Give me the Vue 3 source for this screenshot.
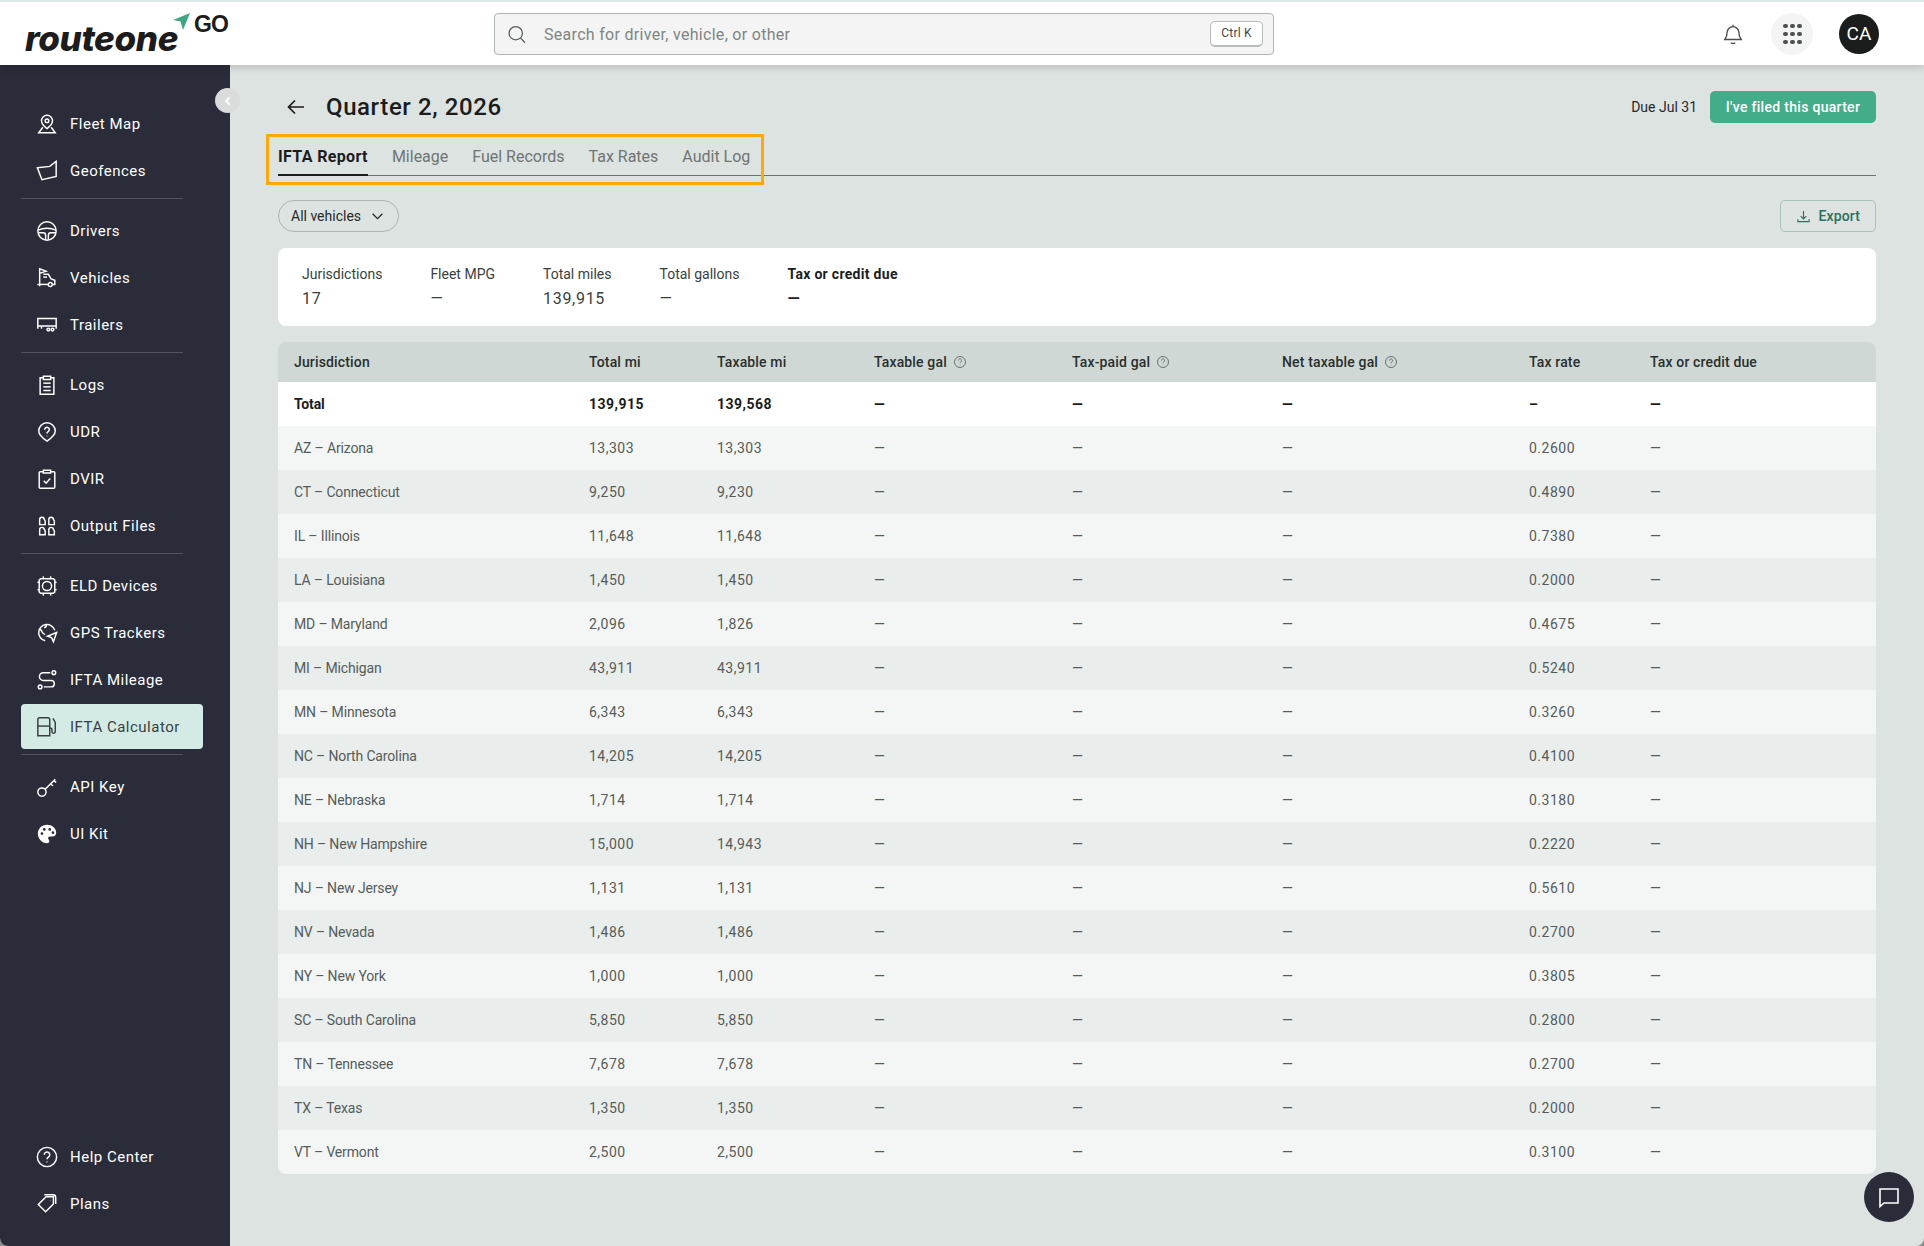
<script setup>
const navGroups = [
  [
    { label: 'Fleet Map', icon: ['M12 2.500a6 6 0 0 1 6 6c0 3.200-3 6.200-6 8.500-3-2.300-6-5.300-6-8.500a6 6 0 0 1 6-6z', 'M12 6.500a2 2 0 1 0 0 4 2 2 0 0 0 0-4z', 'M7.500 15.500 3 21.500h18l-4.500-6'] },
    { label: 'Geofences', icon: ['M1.500 8.500 15 7l7-5.500V18L6.500 21.500z'] }
  ],
  [
    { label: 'Drivers', icon: ['M12 2a10 10 0 1 0 0 20 10 10 0 0 0 0-20z', 'M2.500 11c3-1.500 6.300-2 9.500-2s6.500.500 9.500 2', 'M2.500 14H8c1.500 0 2.500 1.500 2.500 3v4.500', 'M21.500 14H16c-1.500 0-2.500 1.500-2.500 3v4.500'] },
    { label: 'Vehicles', icon: ['M4 21V2l7 2.500-7 2.500', 'M8 8h5.500l3 5 4 1.500V19h-2', 'M3 19H1.500', 'M3 19h10', 'M8 11h4', 'M15.500 17a2.200 2.200 0 1 0 0 4.400 2.200 2.200 0 0 0 0-4.400z'] },
    { label: 'Trailers', icon: ['M2 5h20v8H2z', 'M2 13v3', 'M22 13v3', 'M6 13v3', 'M13.500 15.500a1.500 1.500 0 1 0 0 3 1.500 1.500 0 0 0 0-3z', 'M18 15.500a1.500 1.500 0 1 0 0 3 1.500 1.500 0 0 0 0-3z'] }
  ],
  [
    { label: 'Logs', icon: ['M8 4H4.500v18h15V4H16', 'M8 2.500h8v3.500H8z', 'M8 10h8', 'M8 14h8', 'M8 18h8'] },
    { label: 'UDR', icon: ['M12 2a9 9 0 0 1 9 9c0 4.500-4.500 8-9 11-4.500-3-9-6.500-9-11a9 9 0 0 1 9-9z', 'M9.500 9.500a2.500 2.500 0 1 1 3.800 2.100c-.9.600-1.300 1-1.300 2', 'M12 16v.600'] },
    { label: 'DVIR', icon: ['M8 4H4.500a1 1 0 0 0-1 1v16a1 1 0 0 0 1 1h15a1 1 0 0 0 1-1V5a1 1 0 0 0-1-1H16', 'M8 2.500h8v3H8z', 'M8.500 14l2.500 2.500 4.500-5'] },
    { label: 'Output Files', icon: ['M4 10.500V5a2.500 2.500 0 0 1 5 0 2 2 0 0 1 1 1.500v4z', 'M14 10.500V5a2.500 2.500 0 0 1 5 0 2 2 0 0 1 1 1.500v4z', 'M4 21.500V16a2.500 2.500 0 0 1 5 0 2 2 0 0 1 1 1.500v4z', 'M14 21.500V16a2.500 2.500 0 0 1 5 0 2 2 0 0 1 1 1.500v4z'] }
  ],
  [
    { label: 'ELD Devices', icon: ['M5 4h14l1.500 1.500v13L19 20H5l-1.500-1.500v-13z', 'M12 7a5 5 0 1 0 0 10 5 5 0 0 0 0-10z', 'M8 1.500V4', 'M16 1.500V4', 'M8 20v2.500', 'M16 20v2.500', 'M1.500 8h2', 'M1.500 16h2', 'M20.500 8h2', 'M20.500 16h2'] },
    { label: 'GPS Trackers', icon: ['M10 20.500A9 9 0 1 1 20.500 9', 'M3 8c2 0 3 1 3.500 2.500.5 2 2.500 2 3 3.500', 'M11 2.500c1 2 0 3-2 4', 'M22.500 11.500l-10 4 4.500 1.500 2 4.500z'] },
    { label: 'IFTA Mileage', icon: ['M19.500 2a2 2 0 1 0 0 4 2 2 0 0 0 0-4z', 'M15.500 4H8a4 4 0 0 0 0 8.500h8.500a3.500 3.500 0 0 1 0 7H8.500', 'M4.500 17.500a2 2 0 1 0 0 4 2 2 0 0 0 0-4z'] },
    { label: 'IFTA Calculator', active: true, icon: ['M2 21.500V4a2 2 0 0 1 2-2h9a2 2 0 0 1 2 2v17.500z', 'M2 11h13', 'M18.500 2.500 21 7v10a1.800 1.800 0 0 1-3.600 0v-2.500c0-1-.9-1.500-2.400-1.500'] }
  ],
  [
    { label: 'API Key', icon: ['M6.500 13a4.500 4.500 0 1 0 0 9 4.500 4.500 0 0 0 0-9z', 'M10 14.500 21 3.500', 'M16 8.500l2.500 2.500', 'M19.500 5l2.500 2'] },
    { label: 'UI Kit', fill: true, icon: ['M12 2C6.200 2 2 6.300 2 11.700 2 17 6.400 22 12 22c1.600 0 2.500-1 2.500-2.200 0-1.500-1.300-1.800-1.300-3.100 0-1.100.9-1.900 2.100-1.900H18c2.500 0 4-1.800 4-4.200C22 5.700 17.500 2 12 2zM6.500 13a1.500 1.500 0 1 1 0-3 1.500 1.500 0 0 1 0 3zM9 8.500a1.500 1.500 0 1 1 0-3 1.500 1.500 0 0 1 0 3zm6 0a1.500 1.500 0 1 1 0-3 1.500 1.500 0 0 1 0 3zm3.500 3.500a1.500 1.500 0 1 1 0-3 1.500 1.500 0 0 1 0 3z'] }
  ]
]

const bottomNav = [
  { label: 'Help Center', icon: ['M12 1.500a10.500 10.500 0 1 0 0 21 10.500 10.500 0 0 0 0-21z', 'M9 9.500a3 3 0 1 1 4.500 2.600c-1 .6-1.500 1.100-1.500 2.400', 'M12 17v.600'] },
  { label: 'Plans', icon: ['M2.500 12.500 11 4h8v8l-8.500 8.500z', 'M15.500 7.500v.500', 'M9 2h9.500a3 3 0 0 1 3 3v7'] }
]

const tabs = ['IFTA Report', 'Mileage', 'Fuel Records', 'Tax Rates', 'Audit Log']

const stats = [
  { label: 'Jurisdictions', value: '17' },
  { label: 'Fleet MPG', value: '—' },
  { label: 'Total miles', value: '139,915' },
  { label: 'Total gallons', value: '—' },
  { label: 'Tax or credit due', value: '—', strong: true }
]

const columns = [
  { label: 'Jurisdiction' },
  { label: 'Total mi' },
  { label: 'Taxable mi' },
  { label: 'Taxable gal', help: true },
  { label: 'Tax-paid gal', help: true },
  { label: 'Net taxable gal', help: true },
  { label: 'Tax rate' },
  { label: 'Tax or credit due' }
]

const rows = [
  ['AZ – Arizona', '13,303', '13,303', '0.2600'],
  ['CT – Connecticut', '9,250', '9,230', '0.4890'],
  ['IL – Illinois', '11,648', '11,648', '0.7380'],
  ['LA – Louisiana', '1,450', '1,450', '0.2000'],
  ['MD – Maryland', '2,096', '1,826', '0.4675'],
  ['MI – Michigan', '43,911', '43,911', '0.5240'],
  ['MN – Minnesota', '6,343', '6,343', '0.3260'],
  ['NC – North Carolina', '14,205', '14,205', '0.4100'],
  ['NE – Nebraska', '1,714', '1,714', '0.3180'],
  ['NH – New Hampshire', '15,000', '14,943', '0.2220'],
  ['NJ – New Jersey', '1,131', '1,131', '0.5610'],
  ['NV – Nevada', '1,486', '1,486', '0.2700'],
  ['NY – New York', '1,000', '1,000', '0.3805'],
  ['SC – South Carolina', '5,850', '5,850', '0.2800'],
  ['TN – Tennessee', '7,678', '7,678', '0.2700'],
  ['TX – Texas', '1,350', '1,350', '0.2000'],
  ['VT – Vermont', '2,500', '2,500', '0.3100']
]
</script>

<template>
  <div class="page">
    <header class="topbar">
      <div class="logo">
        <span class="logo-word">routeone</span>
        <svg class="logo-plane" viewBox="0 0 18 18"><path d="M0 7 17 0 10 17 7.500 8.500z" fill="#3fa583" /></svg>
        <span class="logo-go">GO</span>
      </div>
      <div class="search">
        <svg class="search-icon" viewBox="0 0 24 24"><path d="M10.500 3a8 8 0 1 0 0 16 8 8 0 0 0 0-16zM16.500 17l5 5.500" /></svg>
        <span class="search-text">Search for driver, vehicle, or other</span>
        <span class="kbd">Ctrl K</span>
      </div>
      <div class="top-actions">
        <svg class="bell" viewBox="0 0 24 24"><path d="M12 2v2M12 4a6.500 6.500 0 0 0-6.500 6.500c0 4.500-1.500 6-2.500 7.500h18c-1-1.500-2.500-3-2.500-7.500A6.500 6.500 0 0 0 12 4zM9.500 21.500c1.500 1 3.500 1 5 0" /></svg>
        <div class="apps">
          <span v-for="n in 9" :key="n" class="dot"></span>
        </div>
        <div class="avatar">CA</div>
      </div>
    </header>

    <div class="body">
      <aside class="sidebar">
        <nav class="nav">
          <div v-for="(group, i) in navGroups" :key="i" class="nav-group">
            <div v-for="item in group" :key="item.label" class="nav-item" :class="{ active: item.active }">
              <svg class="nav-icon" :class="{ filled: item.fill }" viewBox="0 0 24 24">
                <path v-for="(d, j) in item.icon" :key="j" :d="d" />
              </svg>
              <span>{{ item.label }}</span>
            </div>
          </div>
        </nav>
        <div class="nav-bottom">
          <div v-for="item in bottomNav" :key="item.label" class="nav-item">
            <svg class="nav-icon" viewBox="0 0 24 24">
              <path v-for="(d, j) in item.icon" :key="j" :d="d" />
            </svg>
            <span>{{ item.label }}</span>
          </div>
        </div>
      </aside>

      <button class="collapse">
        <svg viewBox="0 0 12 12"><path d="M7.500 2.500 4 6l3.500 3.500" /></svg>
      </button>

      <main class="main">
        <div class="page-head">
          <div class="title-wrap">
            <svg class="back" viewBox="0 0 20 20"><path d="M18 10H2.500M9 3.500 2.500 10 9 16.500" /></svg>
            <h1>Quarter 2, 2026</h1>
          </div>
          <div class="head-right">
            <span class="due">Due Jul 31</span>
            <button class="filed">I've filed this quarter</button>
          </div>
        </div>

        <div class="tabs">
          <div class="tab-group">
            <span v-for="(tab, i) in tabs" :key="tab" class="tab" :class="{ current: i === 0 }">{{ tab }}</span>
            <div class="highlight"></div>
          </div>
        </div>

        <div class="filters">
          <button class="pill">
            All vehicles
            <svg viewBox="0 0 12 12"><path d="M1.500 3.500 6 8l4.500-4.500" /></svg>
          </button>
          <button class="export">
            <svg viewBox="0 0 16 16"><path d="M8 2v8M5 7.500l3 3 3-3M2 11v2.500h12V11" /></svg>
            Export
          </button>
        </div>

        <section class="summary">
          <div v-for="s in stats" :key="s.label" class="stat" :class="{ strong: s.strong }">
            <div class="stat-label">{{ s.label }}</div>
            <div class="stat-value">{{ s.value }}</div>
          </div>
        </section>

        <table class="report">
          <colgroup>
            <col style="width: 311px" />
            <col style="width: 128px" />
            <col style="width: 157px" />
            <col style="width: 198px" />
            <col style="width: 210px" />
            <col style="width: 247px" />
            <col style="width: 121px" />
            <col />
          </colgroup>
          <thead>
            <tr>
              <th v-for="c in columns" :key="c.label">
                {{ c.label }}
                <svg v-if="c.help" class="help" viewBox="0 0 14 14">
                  <circle cx="7" cy="7" r="5.500" />
                  <path d="M5.400 5.500a1.600 1.600 0 1 1 2.500 1.400c-.6.400-.9.700-.9 1.300M7 9.800v.4" />
                </svg>
              </th>
            </tr>
          </thead>
          <tbody>
            <tr class="total">
              <td class="name">Total</td>
              <td>139,915</td>
              <td>139,568</td>
              <td>—</td>
              <td>—</td>
              <td>—</td>
              <td>–</td>
              <td>—</td>
            </tr>
            <tr v-for="r in rows" :key="r[0]">
              <td class="name">{{ r[0] }}</td>
              <td>{{ r[1] }}</td>
              <td>{{ r[2] }}</td>
              <td>—</td>
              <td>—</td>
              <td>—</td>
              <td>{{ r[3] }}</td>
              <td>—</td>
            </tr>
          </tbody>
        </table>
      </main>
    </div>

    <button class="chat">
      <svg viewBox="0 0 24 24"><path d="M3 4h18v14H7l-4 3.500z" /></svg>
    </button>
  </div>
</template>

<style>
html {
  background: #8a8f8e;
}
</style>

<style scoped>
.page {
  position: relative;
  height: 1246px;
  overflow: hidden;
  border-radius: 0 0 8px 8px;
  background: #dde3e1;
  font-family: Roboto, "Noto Sans", sans-serif;
  color: #1b1d1d;
}

.topbar {
  position: relative;
  z-index: 3;
  display: flex;
  align-items: center;
  height: 63px;
  background: #fff;
  border-top: 2px solid #dfe8e8;
  box-shadow: 0 2px 8px rgba(0, 0, 0, 0.18);
}

.logo {
  display: flex;
  width: 494px;
  flex: none;
  padding-left: 25px;
  box-sizing: border-box;
  align-items: flex-start;
  height: 46px;
}

.logo-word {
  margin-top: 7px;
  font-family: Inter, sans-serif;
  font-size: 35px;
  line-height: 40px;
  font-weight: 800;
  font-style: italic;
  letter-spacing: -0.4px;
  color: #1c1c1c;
}

.logo-plane {
  width: 18px;
  height: 18px;
  margin: 2px 0 0 -5px;
}

.logo-go {
  margin: 1px 0 0 3px;
  font-family: "Liberation Sans", sans-serif;
  font-size: 23px;
  line-height: 24px;
  font-weight: 700;
  letter-spacing: -1px;
  color: #1c1c1c;
}

.search {
  display: flex;
  align-items: center;
  width: 780px;
  height: 42px;
  box-sizing: border-box;
  padding: 0 10px 0 12px;
  background: #f4f4f4;
  border: 1px solid #b0b6b4;
  border-radius: 4px;
}

.search-icon {
  width: 20px;
  height: 20px;
  fill: none;
  stroke: #555c5a;
  stroke-width: 1.5;
}

.search-text {
  flex: 1;
  margin: 1px 0 0 17px;
  font-size: 16px;
  letter-spacing: 0.3px;
  color: #7f8583;
}

.kbd {
  display: flex;
  align-items: center;
  justify-content: center;
  width: 53px;
  height: 26px;
  box-sizing: border-box;
  background: #fff;
  border: 1px solid #b7bcba;
  border-bottom-width: 2px;
  border-radius: 5px;
  font-size: 12px;
  letter-spacing: 0.2px;
  color: #3e4644;
}

.top-actions {
  display: flex;
  align-items: center;
  margin-left: auto;
  padding-right: 45px;
}

.bell {
  width: 22px;
  height: 24px;
  margin-right: 27px;
  fill: none;
  stroke: #4a4f4e;
  stroke-width: 1.5;
}

.apps {
  display: grid;
  grid-template-columns: repeat(3, 4px);
  grid-auto-rows: 4px;
  gap: 4px 3px;
  justify-content: center;
  align-content: center;
  width: 42px;
  height: 42px;
  margin-right: 26px;
  border-radius: 50%;
  background: #f4f4f4;
}

.dot {
  width: 4.500px;
  height: 4.500px;
  border-radius: 50%;
  background: #4c5250;
}

.avatar {
  display: flex;
  align-items: center;
  justify-content: center;
  width: 40px;
  height: 40px;
  border-radius: 50%;
  background: #1b1d1d;
  color: #fff;
  font-size: 19px;
}

.body {
  position: relative;
  display: flex;
  height: 1181px;
}

.sidebar {
  display: flex;
  flex-direction: column;
  justify-content: space-between;
  width: 230px;
  flex: none;
  box-sizing: border-box;
  padding: 35px 0 19px 21px;
  background: #2a2c3a;
}

.nav-group {
  width: 162px;
  padding-bottom: 4px;
  margin-bottom: 8px;
  border-bottom: 1px solid #50525f;
}

.nav-group:last-child {
  border-bottom: 0;
  margin-bottom: 0;
}

.nav-item {
  display: flex;
  align-items: center;
  gap: 12px;
  width: 182px;
  height: 47px;
  box-sizing: border-box;
  padding-left: 15px;
  border-radius: 4px;
  font-size: 15px;
  letter-spacing: 0.5px;
  color: #fff;
}

.nav-item.active {
  height: 45px;
  margin: 1px 0;
  background: #d3ebe4;
  color: #3a3e44;
}

.nav-icon {
  width: 22px;
  height: 22px;
  flex: none;
  fill: none;
  stroke: currentColor;
  stroke-width: 1.6;
}

.nav-icon.filled {
  fill: currentColor;
  stroke: none;
}

.collapse {
  position: absolute;
  z-index: 2;
  left: 215px;
  top: 23px;
  display: flex;
  align-items: center;
  justify-content: center;
  width: 25px;
  height: 25px;
  padding: 0;
  border: 0;
  border-radius: 50%;
  background: #dadcdc;
}

.collapse svg {
  width: 12px;
  height: 12px;
  fill: none;
  stroke: #fff;
  stroke-width: 2;
}

.main {
  flex: 1;
  min-width: 0;
  padding: 26px 48px 0;
}

.page-head {
  display: flex;
  align-items: center;
  justify-content: space-between;
  height: 32px;
}

.title-wrap {
  display: flex;
  align-items: center;
  gap: 20px;
  padding-left: 8px;
}

.back {
  width: 20px;
  height: 20px;
  fill: none;
  stroke: #1b1d1d;
  stroke-width: 1.7;
}

h1 {
  margin: 0;
  font-size: 24px;
  font-weight: 500;
  letter-spacing: 0.6px;
}

.head-right {
  display: flex;
  align-items: center;
  gap: 13px;
}

.due {
  font-size: 14px;
  color: #262a2e;
}

.filed {
  width: 166px;
  height: 32px;
  border: 0;
  border-radius: 5px;
  background: #43ad89;
  color: #fff;
  font: 500 14px Roboto, sans-serif;
  letter-spacing: 0.3px;
}

.tabs {
  margin-top: 14px;
  border-bottom: 1px solid #6c7270;
}

.tab-group {
  position: relative;
  display: inline-flex;
  vertical-align: bottom;
  gap: 24px;
  height: 38px;
}

.tab {
  line-height: 40px;
  font-size: 16px;
  color: #6f7573;
}

.tab.current {
  box-sizing: border-box;
  height: 39px;
  border-bottom: 2px solid #1b1d1d;
  font-weight: 700;
  letter-spacing: 0.35px;
  color: #1b1d1d;
}

.highlight {
  position: absolute;
  left: -12px;
  right: -14px;
  top: -3px;
  bottom: -10px;
  border: 3px solid #ffa80a;
  pointer-events: none;
}

.filters {
  display: flex;
  align-items: center;
  justify-content: space-between;
  margin-top: 24px;
}

.pill {
  display: flex;
  align-items: center;
  gap: 10px;
  height: 32px;
  padding: 0 14px 0 12px;
  background: transparent;
  border: 1px solid #aeb5b3;
  border-radius: 16px;
  font: 14px Roboto, sans-serif;
  color: #262a2a;
}

.pill svg {
  width: 13px;
  height: 13px;
  fill: none;
  stroke: #262a2a;
  stroke-width: 1.2;
}

.export {
  display: flex;
  align-items: center;
  gap: 7px;
  height: 32px;
  padding: 0 15px;
  background: transparent;
  border: 1px solid #a4c0b8;
  border-radius: 5px;
  font: 500 14px Roboto, sans-serif;
  letter-spacing: 0.15px;
  color: #2c6e60;
}

.export svg {
  width: 15px;
  height: 15px;
  fill: none;
  stroke: #2c6e60;
  stroke-width: 1.2;
}

.summary {
  display: flex;
  gap: 48px;
  height: 78px;
  box-sizing: border-box;
  margin-top: 16px;
  padding: 17px 24px 0;
  background: #fff;
  border-radius: 8px;
}

.stat-label {
  font-size: 14px;
  line-height: 18px;
  color: #3a3f3e;
}

.stat-value {
  margin-top: 6px;
  font-size: 16px;
  line-height: 20px;
  letter-spacing: 0.7px;
  color: #3a3f3e;
}

.stat.strong .stat-label,
.stat.strong .stat-value {
  font-weight: 700;
  letter-spacing: 0.3px;
  color: #1b1d1d;
}

.report {
  width: 100%;
  margin-top: 16px;
  border-collapse: separate;
  border-spacing: 0;
  table-layout: fixed;
  border-radius: 8px;
  overflow: hidden;
  font-size: 14px;
}

th {
  height: 40px;
  padding: 0 0 0 16px;
  text-align: left;
  background: #cfd8d5;
  font-weight: 500;
  letter-spacing: 0.15px;
  color: #2a2f2e;
}

th + th,
td + td {
  padding-left: 0;
}

td {
  height: 44px;
  padding: 0 0 0 16px;
  letter-spacing: 0.5px;
  color: #555c5a;
}

td.name {
  letter-spacing: -0.15px;
}

tbody tr:nth-child(even) td {
  background: #f4f6f5;
}

tbody tr:nth-child(odd) td {
  background: #e9edec;
}

tbody tr.total td {
  background: #fff;
  font-weight: 700;
  color: #1b1d1d;
}

.help {
  width: 14px;
  height: 14px;
  margin-left: 2px;
  vertical-align: -2px;
  fill: none;
  stroke: #6a716f;
  stroke-width: 1;
}

.chat {
  position: absolute;
  z-index: 4;
  right: 10px;
  bottom: 24px;
  display: flex;
  align-items: center;
  justify-content: center;
  width: 50px;
  height: 50px;
  padding: 0;
  border: 0;
  border-radius: 50%;
  background: #2a2c3a;
}

.chat svg {
  width: 24px;
  height: 24px;
  fill: none;
  stroke: #fff;
  stroke-width: 1.6;
}
</style>
